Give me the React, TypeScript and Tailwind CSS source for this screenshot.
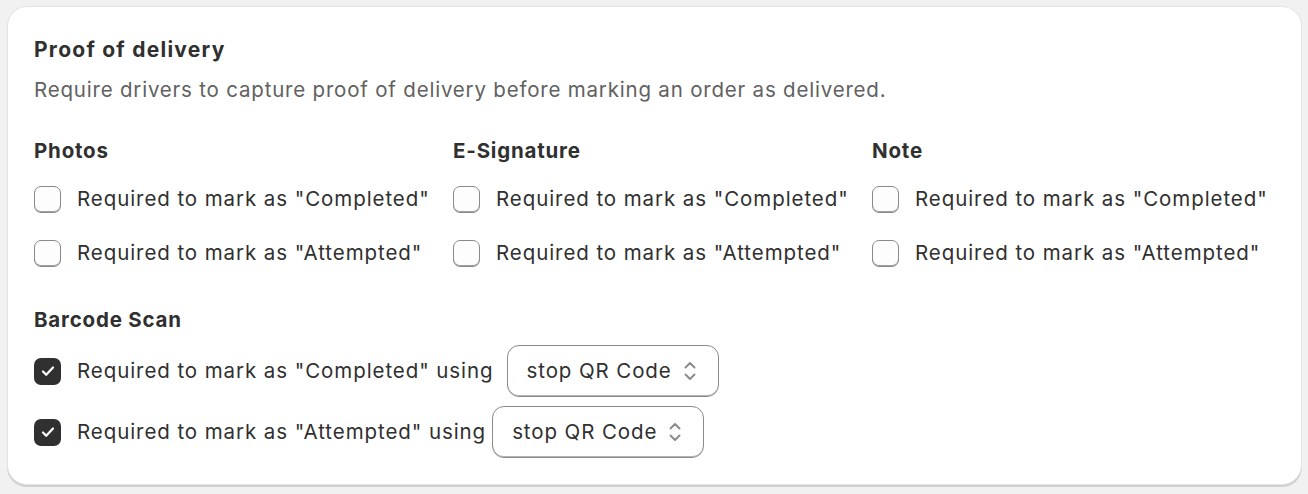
import React from "react";

function Box({ checked }: { checked?: boolean }) {
  if (checked) {
    return (
      <span className="flex h-[27px] w-[27px] shrink-0 items-center justify-center rounded-[7px] bg-[#303030]">
        <svg width="18" height="18" viewBox="0 0 18 18" fill="none">
          <path d="M4 9.5l3.2 3.2L14 5.5" stroke="#fff" strokeWidth="2.3" strokeLinecap="round" strokeLinejoin="round" />
        </svg>
      </span>
    );
  }
  return (
    <span className="h-[27px] w-[27px] shrink-0 rounded-[7px] border-[1.5px] border-[#8a8a8a] bg-[#fdfdfd] shadow-[inset_0_-1px_0_0_#a0a0a0]" />
  );
}

function Row({ label, checked }: { label: string; checked?: boolean }) {
  return (
    <label className="flex h-[30px] items-center gap-[16px]">
      <Box checked={checked} />
      <span className="whitespace-nowrap tracking-[0.92px]">{label}</span>
    </label>
  );
}

function Column({ title }: { title: string }) {
  return (
    <div className="flex flex-col">
      <div className="h-[30px] leading-[30px] font-[650]">{title}</div>
      <div className="mt-[18px] flex flex-col gap-[24px]">
        <Row label={'Required to mark as "Completed"'} />
        <Row label={'Required to mark as "Attempted"'} />
      </div>
    </div>
  );
}

function Select({ ml }: { ml: string }) {
  return (
    <div
      className={`${ml} flex h-[52px] items-center gap-[11px] rounded-[12px] border border-[#8a8a8a] bg-white pl-[19px] pr-[21px] shadow-[inset_0_-1px_0_0_#b5b5b5]`}
    >
      <span className="whitespace-nowrap tracking-[0.9px]">stop QR Code</span>
      <svg width="14" height="24" viewBox="0 0 14 24" fill="none">
        <path d="M2.5 8.5l4.5-4.5 4.5 4.5" stroke="#8a8a8a" strokeWidth="1.9" strokeLinecap="round" strokeLinejoin="round" />
        <path d="M2.5 15.5l4.5 4.5 4.5-4.5" stroke="#8a8a8a" strokeWidth="1.9" strokeLinecap="round" strokeLinejoin="round" />
      </svg>
    </div>
  );
}

export default function App() {
  return (
    <div
      className="min-h-[494px] w-[1308px] bg-[#f1f1f1] pt-[6px] pl-[7px] pr-[6px] text-[20.5px] tracking-[0.8px] text-[#303030]"
      style={{ fontFamily: "Inter, 'Noto Sans', sans-serif" }}
    >
      <div className="rounded-[20px] border border-[#e3e3e3] bg-white px-[26px] pt-[27px] pb-[26px] shadow-[0_2px_0_0_#d0d0d0]">
        <h2 className="h-[32px] text-[21px] leading-[32px] tracking-[1.25px] font-[650]">Proof of delivery</h2>
        <p className="mt-[9px] h-[30px] leading-[30px] text-[#616161]">
          Require drivers to capture proof of delivery before marking an order as delivered.
        </p>
        <div className="mt-[31px] grid grid-cols-3 gap-[16px]">
          <Column title="Photos" />
          <Column title="E-Signature" />
          <Column title="Note" />
        </div>
        <div className="mt-[37px] h-[30px] leading-[30px] font-[650]">Barcode Scan</div>
        <div className="mt-[10px] flex flex-col gap-[9px]">
          <div className="flex items-center">
            <Row label={'Required to mark as "Completed" using'} checked />
            <Select ml="ml-[13px]" />
          </div>
          <div className="flex items-center">
            <Row label={'Required to mark as "Attempted" using'} checked />
            <Select ml="ml-[6px]" />
          </div>
        </div>
      </div>
    </div>
  );
}
